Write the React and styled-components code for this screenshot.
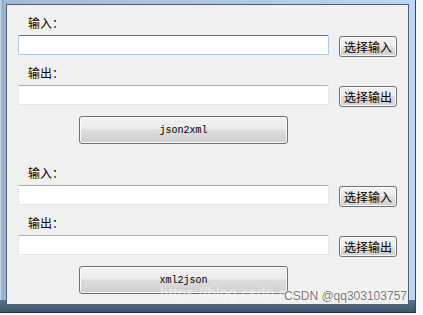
import React from "react";
import styled, { createGlobalStyle } from "styled-components";

const Global = createGlobalStyle`
  html, body { margin: 0; padding: 0; background: #f7f7f7; }
  body { font-family: "Noto Sans CJK SC", "Liberation Sans", sans-serif; }
  * { box-sizing: border-box; }
`;

const Window = styled.div`
  position: relative;
  width: 416px;
  height: 313px;
  display: flex;
  padding: 4px 6px 7px 6px;
  border-right: 1px solid #3b4656;
  border-bottom: 1px solid #26303c;
  background:
    linear-gradient(to bottom, rgba(0,0,0,0) 0, rgba(0,0,0,0) 300px, #58738f 300px, #3d556f 100%),
    linear-gradient(to right, #dce6f1 0, #a9bfd8 1px, #8fa9c8 3px, #a3bad4 5px, #b8d5f2 400px, #bcdaf8 100%);
  background-color: #b8cfe8;
`;

const Panel = styled.div`
  flex: 1;
  border: 1px solid #4f5d6c;
  background: #f0f0f0;
  display: flex;
  flex-direction: column;
`;

const Section = styled.section`
  display: flex;
  flex-direction: column;
  padding: 11px 0;
`;

const Label = styled.div`
  margin-left: 21px;
  height: 14px;
  line-height: 14px;
  font-size: 12px;
  color: #000;
  margin-bottom: 5px;
`;

const Row = styled.div`
  display: flex;
  align-items: flex-start;
  height: 22px;
  margin-left: 11px;
  margin-bottom: 9px;
`;

const Field = styled.div`
  width: 311px;
  height: 20px;
  background: #fff;
  border: 1px solid ${(p) => (p.$focused ? "#a9cbe6" : "#e1e6ee")};
  border-top-color: ${(p) => (p.$focused ? "#3d7bad" : "#abadb3")};
  border-radius: 2px;
`;

const SmallButton = styled.button`
  margin: 1px 0 0 10px;
  width: 58px;
  height: 21px;
  padding: 0;
  border: 1px solid #707070;
  border-radius: 3px;
  box-shadow: inset 0 0 0 1px #fbfbfb;
  background: linear-gradient(to bottom, #f2f2f2 0%, #ebebeb 48%, #dddddd 52%, #cfcfcf 100%);
  font-family: "Noto Sans CJK SC", sans-serif;
  font-size: 12px;
  line-height: 19px;
  color: #000;
`;

const BigButton = styled.button`
  margin-left: 72px;
  width: 209px;
  height: 28px;
  padding: 0;
  border: 1px solid #707070;
  border-radius: 3px;
  box-shadow: inset 0 0 0 1px #fbfbfb;
  background: linear-gradient(to bottom, #f2f2f2 0%, #ebebeb 45%, #dddddd 50%, #cfcfcf 100%);
  font-family: "Liberation Mono", monospace;
  font-size: 10px;
  color: #000;
`;

const Watermark = styled.div`
  position: absolute;
  left: 160px;
  top: 284px;
  font-family: "Liberation Sans", sans-serif;
  font-size: 15px;
  color: rgba(255, 255, 255, 0.55);
  white-space: nowrap;
  letter-spacing: 0.3px;
`;

const Credit = styled.div`
  position: absolute;
  right: 8px;
  top: 289px;
  font-family: "Liberation Sans", sans-serif;
  font-size: 12px;
  color: #7a7a7a;
  text-shadow: 0 0 2px #fff, 0 0 1px #fff;
  white-space: nowrap;
`;

function Block({ title, focused }) {
  return (
    <Section>
      <Label>输入：</Label>
      <Row>
        <Field $focused={focused} />
        <SmallButton>选择输入</SmallButton>
      </Row>
      <Label>输出：</Label>
      <Row>
        <Field />
        <SmallButton>选择输出</SmallButton>
      </Row>
      <BigButton>{title}</BigButton>
    </Section>
  );
}

export default function App() {
  return (
    <>
      <Global />
      <Window>
        <Panel>
          <Block title="json2xml" focused />
          <Block title="xml2json" />
        </Panel>
        <Watermark>https://blog.csdn.net/coolbird31424</Watermark>
        <Credit>CSDN @qq303103757</Credit>
      </Window>
    </>
  );
}
